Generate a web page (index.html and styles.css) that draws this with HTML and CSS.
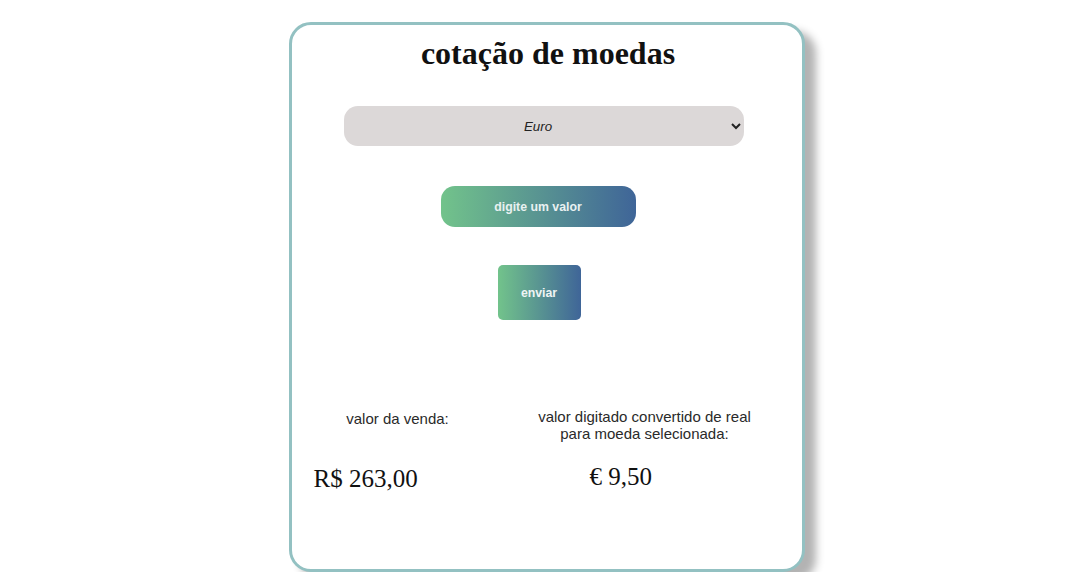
FILE: index.html
```html
<!DOCTYPE html>
<html lang="pt-BR">
<head>
<meta charset="utf-8">
<title>cotação de moedas</title>
<link rel="stylesheet" href="styles.css">
</head>
<body>
<main class="card">
  <h1 class="title">cotação de moedas</h1>
  <select class="currency">
    <option>Euro</option>
    <option>Dólar</option>
  </select>
  <input class="amount" type="text" placeholder="digite um valor">
  <button class="send" type="button">enviar</button>
  <section class="results">
    <p class="label label-left">valor da venda:</p>
    <p class="label label-right">valor digitado convertido de real para moeda selecionada:</p>
    <p class="value value-left">R$ 263,00</p>
    <p class="value value-right">€ 9,50</p>
  </section>
</main>
</body>
</html>
```

FILE: styles.css
```css
html, body {
  margin: 0;
  padding: 0;
  background: #ffffff;
}

body {
  font-family: "Liberation Serif", "Times New Roman", serif;
  padding-top: 22px;
  padding-left: 2px;
}

.card {
  box-sizing: border-box;
  width: 516px;
  height: 550px;
  margin: 0 auto;
  border: 3px solid #93c1c2;
  border-radius: 22px;
  background: #ffffff;
  box-shadow: 11px 9px 8px #b3b3b3;
  display: flex;
  flex-direction: column;
  align-items: center;
}

.title {
  margin: 10px 0 0;
  padding-left: 3px;
  font-size: 32px;
  font-weight: bold;
  color: #111;
  line-height: 37px;
}

.currency {
  margin-top: 34px;
  margin-right: 5px;
  width: 400px;
  height: 40px;
  border: none;
  border-radius: 14px;
  background-color: #dcd8d8;
  font-family: "Liberation Sans", Arial, sans-serif;
  font-size: 13.33px;
  font-style: italic;
  color: #222;
  text-align: center;
  padding: 0 8px;
}

.amount {
  box-sizing: border-box;
  margin-top: 40px;
  margin-right: 17px;
  width: 195px;
  height: 41px;
  border: none;
  border-radius: 14px;
  background: linear-gradient(90deg, #72c38b, #3f6598);
  font-family: "Liberation Sans", Arial, sans-serif;
  font-size: 12.3px;
  font-weight: bold;
  color: #eef4f4;
  text-align: center;
  outline: none;
}

.amount::placeholder {
  color: #e9f1f1;
  opacity: 1;
}

.send {
  margin-top: 38px;
  margin-right: 15px;
  width: 83px;
  height: 55px;
  border: none;
  border-radius: 5px;
  background: linear-gradient(90deg, #72c38b, #3f6598);
  font-family: "Liberation Sans", Arial, sans-serif;
  font-size: 12.3px;
  font-weight: bold;
  color: #eef4f4;
}

.results {
  align-self: stretch;
  margin-top: 88px;
  padding-left: 22px;
  display: grid;
  grid-template-columns: 168px 230px;
  column-gap: 48px;
  row-gap: 20px;
  align-items: start;
}

.label {
  margin: 0;
  font-family: "Liberation Sans", Arial, sans-serif;
  font-size: 15px;
  line-height: 17px;
  color: #2a2a2a;
  text-align: center;
}

.label-left {
  padding-top: 2px;
}

.value {
  margin: 0;
  font-size: 25px;
  color: #111;
  line-height: 30px;
}

.value-left {
  margin-top: 2px;
}

.value-right {
  padding-left: 60px;
}
```
